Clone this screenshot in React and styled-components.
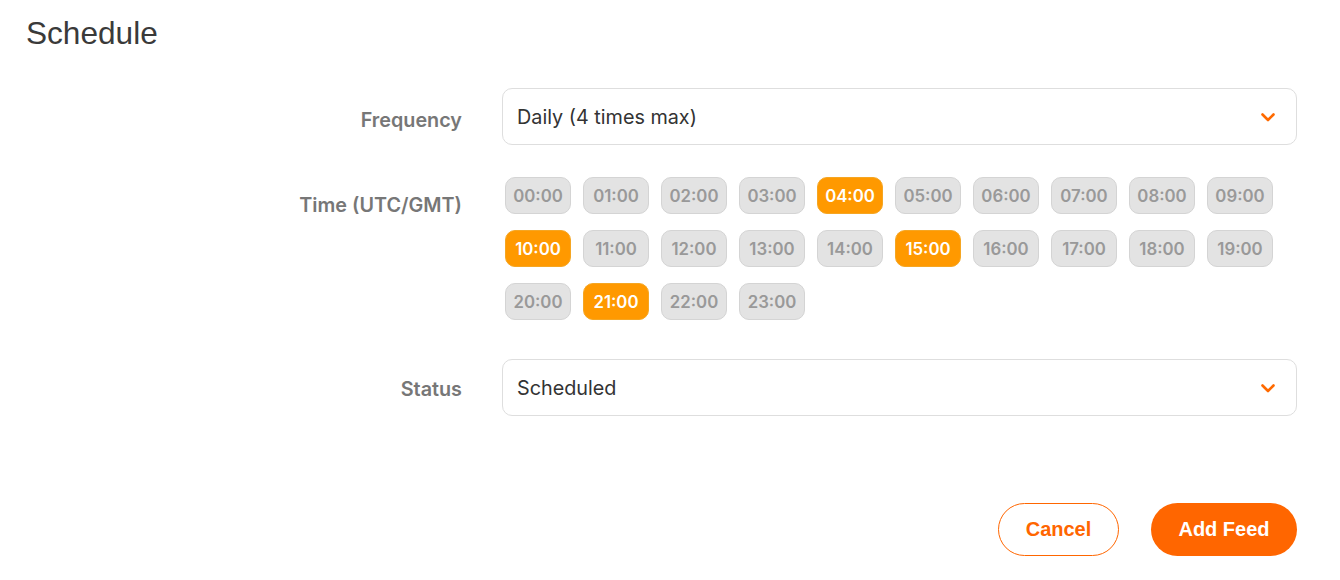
import React, { useState } from "react";
import styled, { createGlobalStyle } from "styled-components";

const GlobalStyle = createGlobalStyle`
  body {
    margin: 0;
    background: #fff;
    font-family: Inter, "Noto Sans", sans-serif;
  }
`;

const HOURS = Array.from({ length: 24 }, (_, i) => `${String(i).padStart(2, "0")}:00`);

function Chevron() {
  return (
    <svg width="18" height="18" viewBox="0 0 18 18" fill="none">
      <path
        d="M3.5 6.5l5.5 5.5 5.5-5.5"
        stroke="#ff6a00"
        strokeWidth="2.6"
        strokeLinecap="round"
        strokeLinejoin="round"
      />
    </svg>
  );
}

function App() {
  const [selected, setSelected] = useState(["04:00", "10:00", "15:00", "21:00"]);

  const toggle = (h) =>
    setSelected((s) => (s.includes(h) ? s.filter((x) => x !== h) : [...s, h]));

  return (
    <>
      <GlobalStyle />
      <Page>
        <Title>Schedule</Title>
        <Form>
          <Label offset={23}>Frequency</Label>
          <Select>
            <span>Daily (4 times max)</span>
            <Chevron />
          </Select>

          <Label offset={19}>Time (UTC/GMT)</Label>
          <Chips>
            {HOURS.map((h) => (
              <Chip key={h} active={selected.includes(h)} onClick={() => toggle(h)}>
                {h}
              </Chip>
            ))}
          </Chips>

          <Label offset={21}>Status</Label>
          <Select>
            <span>Scheduled</span>
            <Chevron />
          </Select>
        </Form>
        <Actions>
          <OutlineButton>Cancel</OutlineButton>
          <PrimaryButton>Add Feed</PrimaryButton>
        </Actions>
      </Page>
    </>
  );
}

export default App;

const Page = styled.div`
  padding: 14px 43px 0 26px;
`;

const Title = styled.h2`
  margin: 0;
  font-family: "Liberation Sans", Arial, sans-serif;
  font-weight: 400;
  font-size: 31.6px;
  line-height: 38px;
  color: #3a3a3a;
`;

const Form = styled.div`
  display: grid;
  grid-template-columns: 436px 1fr;
  column-gap: 40px;
  row-gap: 32px;
  margin-top: 36px;

  & > :nth-child(4) {
    margin-bottom: 7px;
  }
`;

const Label = styled.div`
  text-align: right;
  padding-top: ${(p) => p.offset}px;
  font-size: 19.8px;
  font-weight: 600;
  line-height: 1;
  color: #777;
`;

const Select = styled.div`
  display: flex;
  align-items: center;
  justify-content: space-between;
  height: 57px;
  box-sizing: border-box;
  padding: 0 19px 0 14px;
  border: 1px solid #dedede;
  border-radius: 10px;
  font-size: 19.8px;
  color: #333;
`;

const Chips = styled.div`
  display: flex;
  flex-wrap: wrap;
  gap: 16px 12px;
  padding-left: 3px;
`;

const Chip = styled.button`
  width: 66px;
  height: 37px;
  box-sizing: border-box;
  border-radius: 10px;
  border: 1px solid ${(p) => (p.active ? "#f5a623" : "#d4d4d4")};
  background: ${(p) => (p.active ? "#ff9900" : "#e3e3e3")};
  color: ${(p) => (p.active ? "#fff" : "#999")};
  font-family: Inter, sans-serif;
  font-size: 16.8px;
  font-weight: 600;
  padding: 0;
  cursor: pointer;
`;

const Actions = styled.div`
  display: flex;
  justify-content: flex-end;
  gap: 32px;
  margin-top: 87px;
`;

const ButtonBase = styled.button`
  height: 53px;
  border-radius: 27px;
  font-family: "Liberation Sans", Arial, sans-serif;
  font-size: 20px;
  font-weight: 700;
  cursor: pointer;
`;

const OutlineButton = styled(ButtonBase)`
  width: 121px;
  background: #fff;
  border: 1px solid #ff6600;
  color: #ff6600;
`;

const PrimaryButton = styled(ButtonBase)`
  width: 146px;
  background: #ff6600;
  border: none;
  color: #fff;
`;
